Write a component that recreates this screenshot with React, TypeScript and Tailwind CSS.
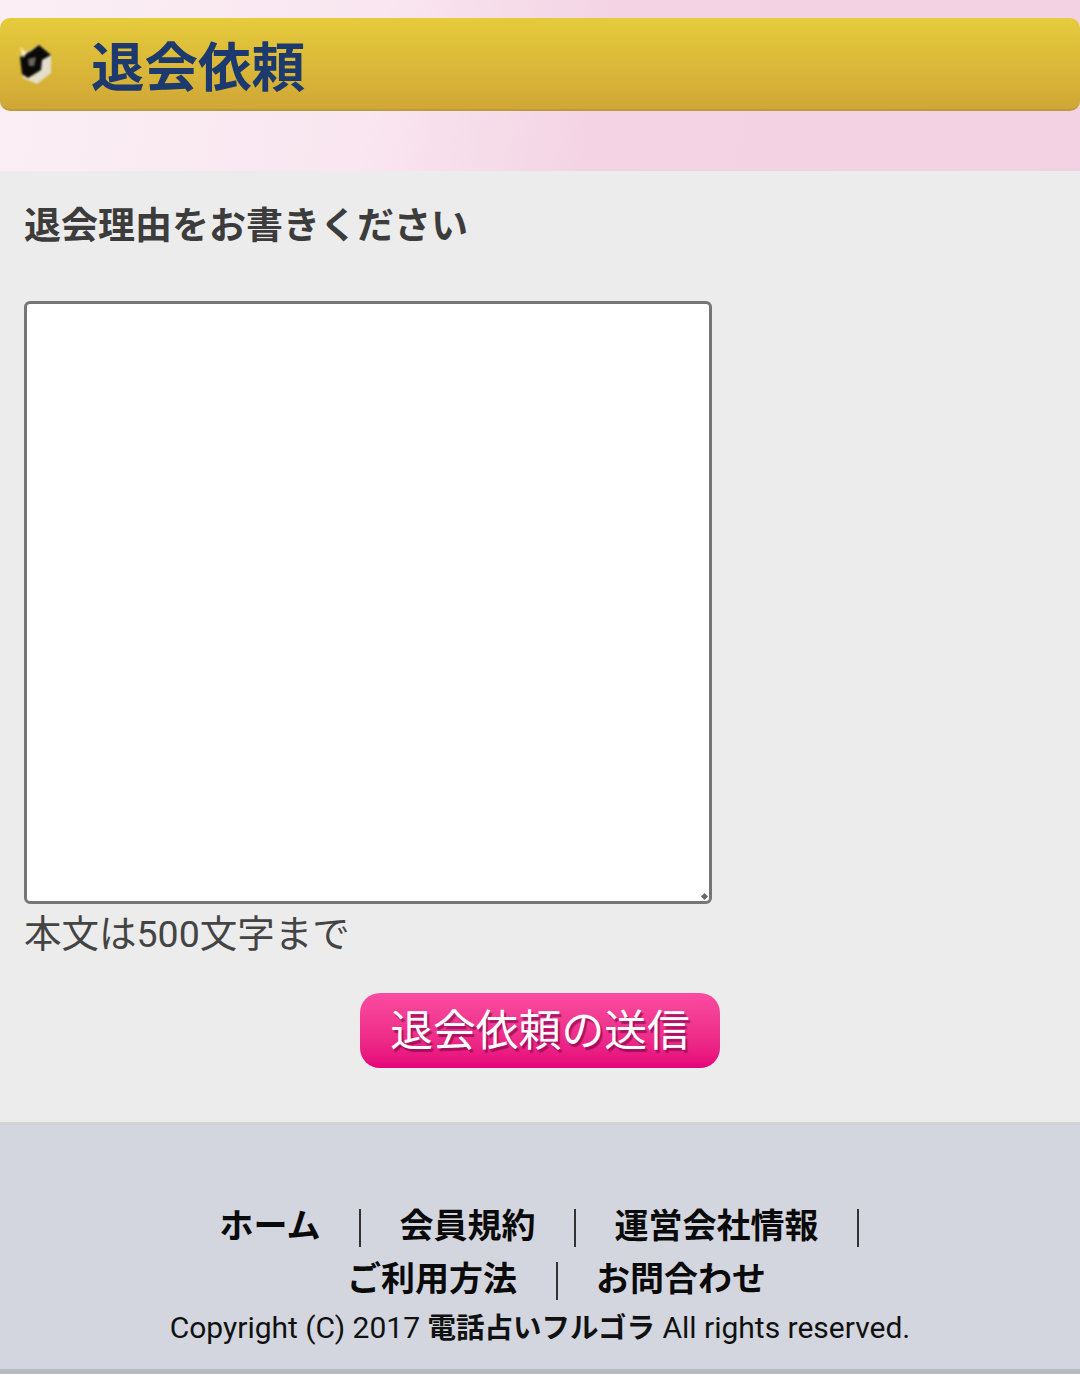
const jp = "font-['Roboto','Noto_Sans_CJK_JP',sans-serif]";

const BoxIcon = () => (
  <svg viewBox="0 0 36 42" className="w-[36px] h-[42px] blur-[1px]">
    <path d="M3 13 L22 2 L34 12 L34 30 L20 41 L6 35 Z" fill="#e4dfcb" />
    <path d="M3 14 L14 8 L22 2 L34 12 L25 17 L24 27 L11 35 L5 31 Z" fill="#0a0908" />
    <path d="M3 4 L10 10 L6 15 Z" fill="#fff6d0" opacity="0.85" />
    <path d="M11 16 L19 14 L17 23 L12 23 Z" fill="#6a665c" />
  </svg>
);

const FooterLink = ({ label, divider = true }: { label: string; divider?: boolean }) => (
  <li className="flex items-center">
    <a className="text-[34px] leading-[53px] font-bold text-[#0a0a0a]">{label}</a>
    {divider && <span className="w-[2px] h-[38px] bg-[#333] mx-[38.5px] mt-[2px]" />}
  </li>
);

export default function App() {
  return (
    <div className={`${jp} w-[1080px] h-[1374px] overflow-hidden bg-[#ececec] flex flex-col`}>
      <header className="h-[171px] pt-[18px] bg-[linear-gradient(100deg,#fbeff5_0%,#f9e6f0_35%,#f4d4e4_55%,#f3d2e3_100%)]">
        <div className="h-[93px] rounded-[10px] bg-gradient-to-b from-[#e6cb3c] to-[#d0a735] border-b-2 border-[#bd9a3f] flex items-center pl-[17px]">
          <BoxIcon />
          <h1 className="ml-[38px] mt-[10px] text-[53.5px] leading-none font-bold text-[#1c3a6e]">退会依頼</h1>
        </div>
      </header>

      <main className="h-[951px] px-[24px] pt-[34px] flex flex-col">
        <h2 className="text-[37px] leading-[44px] font-bold text-[#3c3c3c]">退会理由をお書きください</h2>
        <div className="relative mt-[52px] w-[688px] h-[603px]">
          <textarea
            className="w-full h-full block bg-white border-[3px] border-[#767676] rounded-[6px] resize-none"
            defaultValue=""
          />
          <span className="absolute right-[5px] bottom-[5px] w-[5px] h-[5px] rotate-45 bg-[#666]" />
        </div>
        <p className="mt-[7px] text-[37.5px] leading-[46px] text-[#444]">本文は500文字まで</p>
        <div className="mt-[36px] flex justify-center">
          <button className="w-[360px] h-[75px] pt-[2px] rounded-[20px] bg-gradient-to-b from-[#fb4ba0] to-[#e5007a] text-white text-[42.8px] leading-none [text-shadow:2px_3px_1px_rgba(120,0,70,0.6)]">
            退会依頼の送信
          </button>
        </div>
      </main>

      <footer className="flex-1 bg-[#d3d6de] border-t-[3px] border-[#d0d2d6] border-b-[5px] border-b-[#b9bbc0] pt-[75px] flex flex-col items-center">
        <ul className="flex justify-center items-center pl-[37px]">
          <FooterLink label="ホーム" />
          <FooterLink label="会員規約" />
          <FooterLink label="運営会社情報" />
        </ul>
        <ul className="flex justify-center items-center pl-[33px]">
          <FooterLink label="ご利用方法" />
          <FooterLink label="お問合わせ" divider={false} />
        </ul>
        <p className="text-[30px] leading-[44px] text-[#111]">
          Copyright (C) 2017 <span className="text-[28.5px] font-bold">電話占いフルゴラ</span> All rights reserved.
        </p>
      </footer>
    </div>
  );
}
